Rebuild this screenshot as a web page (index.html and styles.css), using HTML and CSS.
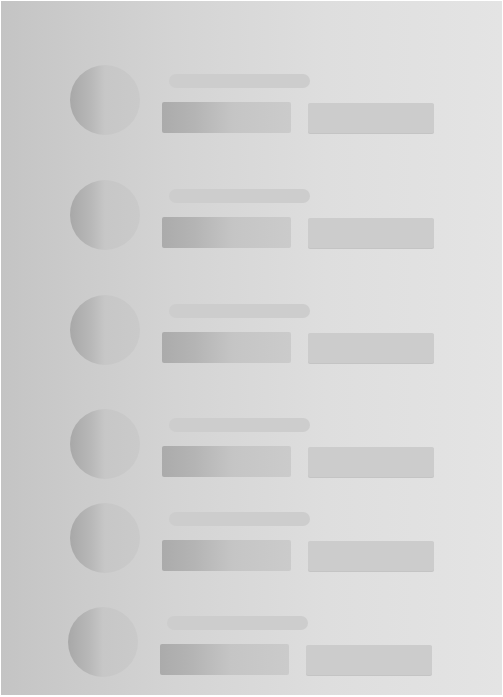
FILE: index.html
```html
<!DOCTYPE html>
<html>
<head>
<meta charset="utf-8">
<link rel="stylesheet" href="styles.css">
</head>
<body>
<div class="panel">
  <div class="row">
    <div class="avatar"></div>
    <div class="info">
      <div class="line"></div>
      <div class="blocks"><div class="block-a"></div><div class="block-b"></div></div>
    </div>
  </div>
  <div class="row gap-45">
    <div class="avatar"></div>
    <div class="info">
      <div class="line"></div>
      <div class="blocks"><div class="block-a"></div><div class="block-b"></div></div>
    </div>
  </div>
  <div class="row gap-45">
    <div class="avatar"></div>
    <div class="info">
      <div class="line"></div>
      <div class="blocks"><div class="block-a"></div><div class="block-b"></div></div>
    </div>
  </div>
  <div class="row gap-44">
    <div class="avatar"></div>
    <div class="info">
      <div class="line"></div>
      <div class="blocks"><div class="block-a"></div><div class="block-b"></div></div>
    </div>
  </div>
  <div class="row gap-24">
    <div class="avatar"></div>
    <div class="info">
      <div class="line"></div>
      <div class="blocks"><div class="block-a"></div><div class="block-b"></div></div>
    </div>
  </div>
  <div class="row gap-34 shifted">
    <div class="avatar"></div>
    <div class="info">
      <div class="line"></div>
      <div class="blocks"><div class="block-a"></div><div class="block-b"></div></div>
    </div>
  </div>
</div>
</body>
</html>
```

FILE: styles.css
```css
html, body {
  margin: 0;
  padding: 0;
  background: #ffffff;
}
body {
  width: 503px;
  height: 697px;
  overflow: hidden;
}
.panel {
  margin: 1px 1px 0 1px;
  width: 501px;
  height: 694px;
  box-sizing: border-box;
  padding-top: 64px;
  background: linear-gradient(to right, #c4c4c4 0%, #d4d4d4 35%, #dedede 65%, #e4e4e4 100%);
  display: flex;
  flex-direction: column;
}
.row {
  display: flex;
  height: 70px;
  padding-left: 69px;
}
.row.shifted {
  padding-left: 67px;
}
.gap-45 { margin-top: 45px; }
.gap-44 { margin-top: 44px; }
.gap-24 { margin-top: 24px; }
.gap-34 { margin-top: 34px; }
.avatar {
  width: 70px;
  height: 70px;
  border-radius: 50%;
  background: linear-gradient(to right, #a8a8a8 0%, #b8b8b8 30%, #c7c7c7 50%, #cacaca 100%);
  flex: none;
}
.info {
  margin-left: 22px;
  display: flex;
  flex-direction: column;
}
.line {
  margin-top: 9px;
  margin-left: 7px;
  width: 141px;
  height: 14px;
  border-radius: 7px;
  background: #cdcdcd;
}
.blocks {
  margin-top: 14px;
  display: flex;
  align-items: flex-start;
  gap: 17px;
}
.block-a {
  width: 129px;
  height: 31px;
  border-radius: 2px;
  background: linear-gradient(to right, #ababab 0%, #b4b4b4 25%, #c5c5c5 55%, #cbcbcb 100%);
}
.block-b {
  margin-top: 1px;
  width: 126px;
  height: 30px;
  border-radius: 2px;
  background: #cccccc;
  box-shadow: 0 1px 0 #c4c4c4;
}
```
